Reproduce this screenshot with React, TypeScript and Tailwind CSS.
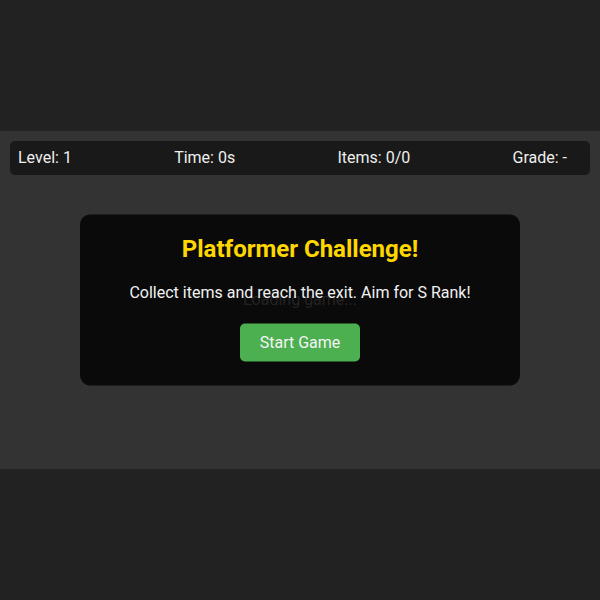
import { useState } from "react";

type Stats = { level: number; time: number; items: number; total: number; grade: string };

function Hud({ stats }: { stats: Stats }) {
  return (
    <div className="flex items-center justify-between rounded-[5px] bg-black/50 py-2 pl-2 pr-[23px] text-base leading-[18px] text-[#eeeeee]">
      <span>Level: {stats.level}</span>
      <span>Time: {stats.time}s</span>
      <span>
        Items: {stats.items}/{stats.total}
      </span>
      <span>Grade: {stats.grade}</span>
    </div>
  );
}

function StartOverlay({ onStart }: { onStart: () => void }) {
  return (
    <div className="absolute left-1/2 top-1/2 w-[440px] -translate-x-1/2 -translate-y-1/2 rounded-[10px] bg-black/80 px-5 pt-5 pb-6 text-center">
      <h2 className="text-2xl font-bold leading-[28px] text-[#ffd700]">Platformer Challenge!</h2>
      <p className="mt-5 text-base leading-[19px] text-[#f2f2f2]">
        Collect items and reach the exit. Aim for S Rank!
      </p>
      <button
        onClick={onStart}
        className="mt-[22px] rounded-[5px] bg-[#4caf50] px-5 py-[10px] text-base leading-[18px] text-[#f4f4f4]"
      >
        Start Game
      </button>
    </div>
  );
}

export default function App() {
  const [started, setStarted] = useState(false);
  const stats: Stats = { level: 1, time: 0, items: 0, total: 0, grade: "-" };

  return (
    <div
      className="flex h-screen w-full items-center justify-center bg-[#222222]"
      style={{ fontFamily: "Roboto, 'Noto Sans', sans-serif" }}
    >
      <div className="relative h-[338px] w-full bg-[#333333] p-[10px]">
        <Hud stats={stats} />
        <div className="absolute inset-0 flex items-center justify-center text-base text-[#aaaaaa]">
          Loading game...
        </div>
        {!started && <StartOverlay onStart={() => setStarted(true)} />}
      </div>
    </div>
  );
}
